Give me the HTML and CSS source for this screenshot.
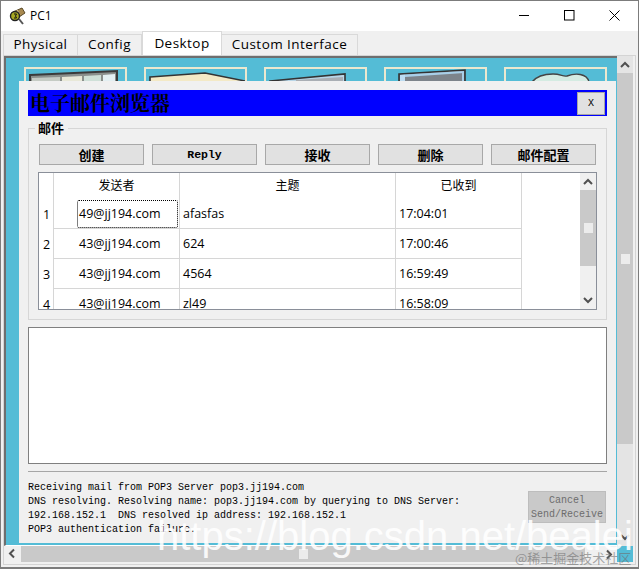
FILE: index.html
```html
<!DOCTYPE html>
<html lang="zh-CN">
<head>
<meta charset="utf-8">
<title>PC1</title>
<link rel="stylesheet" href="styles.css">
</head>
<body>
<div class="window">
  <header class="titlebar">
    <svg class="app-icon" width="17" height="18" viewBox="0 0 17 18">
      <path d="M10 12l4 5" stroke="#555" stroke-width="2"/>
      <path d="M4 5l9-4 3 5-9 6z" fill="#a8894f" stroke="#5a4a28"/>
      <path d="M8 3l3 5" stroke="#e3cf97"/>
      <circle cx="6" cy="9" r="4.5" fill="#a7a822" stroke="#222" stroke-width="1.4"/>
      <path d="M5 7h2.5l-1 2 1 2H5" fill="none" stroke="#111"/>
    </svg>
    <span class="app-name">PC1</span>
    <div class="controls">
      <svg width="11" height="11" viewBox="0 0 11 11"><path d="M0 5.5h10" stroke="#000"/></svg>
      <svg width="11" height="11" viewBox="0 0 11 11"><rect x=".5" y=".5" width="9.5" height="9.5" fill="none" stroke="#000"/></svg>
      <svg width="11" height="11" viewBox="0 0 11 11"><path d="M.5.5l10 10M10.5.5l-10 10" stroke="#000"/></svg>
    </div>
  </header>

  <nav class="tabs">
    <div class="tab tab-physical">Physical</div>
    <div class="tab tab-config">Config</div>
    <div class="tab tab-desktop">Desktop</div>
    <div class="tab tab-custom">Custom Interface</div>
  </nav>

  <main class="panel">
    <section class="viewport">
      <div class="icon-grid">
        <div class="card">
          <svg class="art" width="99" height="20" viewBox="0 0 99 20">
            <path d="M4 6L91 2v18H4z" fill="#8a8f8c" stroke="#3a3a3a" stroke-width="2"/>
            <path d="M6 9l28-1v12H6z" fill="#c5cbc4"/>
            <path d="M36 8l20-1v13H36z" fill="#e8e8d8"/>
            <path d="M58 7l17-1v14H58z" fill="#cfe0d8"/>
            <path d="M77 6l12-1v15H77z" fill="#e3eff2"/>
          </svg>
        </div>
        <div class="card">
          <svg class="art" width="99" height="20" viewBox="0 0 99 20">
            <path d="M4 8L59 4l40 8v8H4z" fill="#f3e9c6" stroke="#333" stroke-width="1.6"/>
          </svg>
        </div>
        <div class="card">
          <svg class="art" width="99" height="20" viewBox="0 0 99 20">
            <path d="M4 12L79 5v15H4z" fill="#b9d6e8" stroke="#333" stroke-width="1.6"/>
            <path d="M30 11l47-3v12H30z" fill="#a9aeb4"/>
          </svg>
        </div>
        <div class="card">
          <svg class="art" width="99" height="20" viewBox="0 0 99 20">
            <path d="M13 5L79 1v19H13z" fill="#7d848b" stroke="#333" stroke-width="1.6"/>
            <path d="M14 6l5-.4V20h-5z" fill="#bcdcf2"/>
            <path d="M19 5.6L78 2v2L19 8z" fill="#a8cfe8"/>
            <path d="M76 3h2v17h-2z" fill="#a8cfe8"/>
          </svg>
        </div>
        <div class="card">
          <svg class="art" width="99" height="20" viewBox="0 0 99 20">
            <path d="M26 13c4-5 10-8 21-8 8 0 10 3 14 2 8-3 20-3 22 6v7H26z" fill="#d4ebe2" stroke="#444" stroke-width="1.4"/>
          </svg>
        </div>
        <div class="card card-low">
          <svg class="art" width="99" height="20" viewBox="0 0 99 20">
            <rect x="0" y="0" width="99" height="20" fill="#54bcd6"/>
            <path d="M5 0h25l-8 6H12z" fill="#3b75a8"/>
            <path d="M5 0h4l4 6H10z" fill="#14263a"/>
            <rect x="27" y="0" width="34" height="6" fill="#cb6d6d"/>
            <rect x="61" y="0" width="26" height="6" fill="#e4e4e0"/>
            <rect x="87" y="0" width="9" height="6" fill="#3a3230"/>
          </svg>
        </div>
      </div>

      <div class="dialog">
        <div class="dialog-title">
          <h1 class="dialog-heading">电子邮件浏览器</h1>
          <button class="close-btn">X</button>
        </div>

        <fieldset class="mail-group">
          <legend class="mail-legend">邮件</legend>
          <div class="actions">
            <button class="action">创建</button>
            <button class="action action-latin">Reply</button>
            <button class="action">接收</button>
            <button class="action">删除</button>
            <button class="action">邮件配置</button>
          </div>
          <div class="list">
            <table class="mail-table">
              <colgroup>
                <col class="c-num"><col class="c-from"><col class="c-subject"><col class="c-time">
              </colgroup>
              <thead>
                <tr><th class="num"></th><th>发送者</th><th>主题</th><th>已收到</th></tr>
              </thead>
              <tbody>
                <tr><td class="num">1</td><td><span class="from focus">49@jj194.com</span></td><td class="text">afasfas</td><td class="text">17:04:01</td></tr>
                <tr><td class="num">2</td><td><span class="from">43@jj194.com</span></td><td class="text">624</td><td class="text">17:00:46</td></tr>
                <tr><td class="num">3</td><td><span class="from">43@jj194.com</span></td><td class="text">4564</td><td class="text">16:59:49</td></tr>
                <tr><td class="num">4</td><td><span class="from">43@jj194.com</span></td><td class="text">zl49</td><td class="text">16:58:09</td></tr>
              </tbody>
            </table>
            <div class="list-scroll">
              <svg class="chev" width="16" height="17" viewBox="0 0 16 17"><path d="M4 11l4-4 4 4" fill="none" stroke="#505050" stroke-width="2"/></svg>
              <div class="list-thumb"><span class="grip"></span></div>
              <svg class="chev chev-bottom" width="16" height="17" viewBox="0 0 16 17"><path d="M4 6l4 4 4-4" fill="none" stroke="#505050" stroke-width="2"/></svg>
            </div>
          </div>
        </fieldset>

        <div class="message"></div>
        <hr class="divider">

        <div class="status">
          <pre class="log">Receiving mail from POP3 Server pop3.jj194.com
DNS resolving. Resolving name: pop3.jj194.com by querying to DNS Server:
192.168.152.1  DNS resolved ip address: 192.168.152.1
POP3 authentication failure.</pre>
          <button class="cancel" disabled>Cancel<br>Send/Receive</button>
        </div>
      </div>
    </section>

    <aside class="v-scroll">
      <svg class="chev" width="16" height="17" viewBox="0 0 16 17"><path d="M4 11l4-4 4 4" fill="none" stroke="#505050" stroke-width="2"/></svg>
      <div class="v-thumb"><span class="grip"></span></div>
      <svg class="chev chev-bottom" width="16" height="17" viewBox="0 0 16 17"><path d="M4 6l4 4 4-4" fill="none" stroke="#505050" stroke-width="2"/></svg>
    </aside>

    <div class="h-scroll">
      <svg class="chev" width="17" height="15" viewBox="0 0 17 15"><path d="M10 3.5l-4 4 4 4" fill="none" stroke="#505050" stroke-width="2"/></svg>
      <div class="h-thumb"><span class="grip"></span></div>
      <svg class="chev chev-end" width="17" height="15" viewBox="0 0 17 15"><path d="M7 3.5l4 4-4 4" fill="none" stroke="#505050" stroke-width="2"/></svg>
    </div>
    <div class="corner"></div>
  </main>

  <div class="watermark">https://blog.csdn.net/bealei</div>
  <div class="watermark-small">@稀土掘金技术社区</div>
</div>
</body>
</html>
```

FILE: styles.css
```css
* { box-sizing: border-box; }
html, body { margin: 0; padding: 0; }
body { width: 639px; height: 569px; overflow: hidden; background: #fff; }

.window {
  position: relative;
  width: 639px;
  height: 569px;
  display: flex;
  flex-direction: column;
  background: #f0f0f0;
  border: 1px solid #7c7c7c;
  border-bottom-width: 2px;
  overflow: hidden;
  font-family: "Open Sans", "Noto Sans CJK SC", sans-serif;
  color: #000;
}

/* title bar */
.titlebar {
  flex: none;
  height: 30px;
  background: #fff;
  display: flex;
  align-items: center;
  padding-left: 8px;
}
.app-icon { margin-right: 4px; margin-top: -1px; }
.app-name { font-size: 12px; margin-top: -1px; }
.controls {
  margin-left: auto;
  display: flex;
  gap: 34px;
  padding-right: 18px;
  margin-top: -1px;
}

/* tabs */
.tabs {
  flex: none;
  height: 24px;
  display: flex;
  align-items: flex-end;
  padding-left: 2px;
  font-size: 13.5px;
  letter-spacing: .45px;
}
.tab {
  height: 21px;
  padding-bottom: 2px;
  display: flex;
  align-items: center;
  justify-content: center;
  background: #f0f0f0;
  border: 1px solid #d9d9d9;
  border-bottom: 0;
  border-left: 0;
}
.tab-physical { width: 75px; border-left: 1px solid #d9d9d9; }
.tab-config { width: 64px; }
.tab-desktop { width: 80px; height: 24px; padding-bottom: 2px; background: #fff; border-left: 1px solid #d9d9d9; }
.tab-custom { width: 136px; }

/* main panel */
.panel {
  flex: 1;
  margin: 0 2px 2px 2px;
  border: 1px solid #d4d4d4;
  outline: 0;
  display: grid;
  grid-template-columns: 613px 16px;
  grid-template-rows: 490px 16px;
  min-height: 0;
}

.viewport {
  position: relative;
  overflow: hidden;
  background: #54bcd6;
  border-top: 2px solid #6e6e6e;
  border-left: 2px solid #6e6e6e;
  border-bottom: 1px solid #fff;
}

/* desktop launcher icons behind the dialog */
.icon-grid {
  display: grid;
  grid-template-columns: repeat(5, 103px);
  grid-template-rows: 103px 103px;
  column-gap: 17px;
  row-gap: 350px;
  padding: 9px 0 0 18px;
}
.card {
  border: 2px solid #ebe8cf;
  background: #54bcd6;
  overflow: hidden;
}
.art { display: block; }
.card-low { border: 0; padding-left: 2px; grid-column: 1; }

/* dialog */
.dialog {
  position: absolute;
  left: 13px;
  top: 23px;
  width: 597px;
  height: 462px;
  padding: 9px;
  background: #f0f0f0;
  display: flex;
  flex-direction: column;
}

.dialog-title {
  flex: none;
  height: 26px;
  background: #0000ff;
  display: flex;
  align-items: flex-start;
  justify-content: space-between;
  padding: 2px 2px 0 2px;
  margin-bottom: 5px;
}
.dialog-heading {
  margin: -1px 0 0;
  font: 700 20px/23px "Noto Serif CJK SC", "Noto Sans CJK SC", serif;
  color: #000;
}
.close-btn {
  width: 28px;
  height: 23px;
  padding: 0;
  background: #e1e1e1;
  border: 1px solid #a6a6a6;
  font: 400 10px "Liberation Mono", monospace;
  color: #000;
}

/* group */
.mail-group {
  flex: none;
  height: 199px;
  margin: 0;
  min-width: 0;
  padding: 9px 9px 0 9px;
  border: 1px solid #d6d6d6;
}
.mail-legend {
  margin-left: -3px;
  padding: 0 4px 0 3px;
  height: 14px;
  font: 700 13px/14px "Noto Sans CJK SC", sans-serif;
}
.actions {
  display: flex;
  gap: 8px;
  margin-left: 1px;
  margin-bottom: 7px;
}
.action {
  width: 105px;
  height: 21px;
  padding: 0;
  background: #e1e1e1;
  border: 1px solid #a8a8a8;
  font: 700 13px/18px "Noto Sans CJK SC", sans-serif;
  color: #000;
}
.action-latin { font: 700 11.5px/18px "Liberation Mono", monospace; }

.list {
  position: relative;
  height: 138px;
  display: flex;
  justify-content: space-between;
  background: #fff;
  border: 1px solid #8a8f99;
  overflow: hidden;
}
.mail-table {
  table-layout: fixed;
  width: 483px;
  flex: none;
  border-collapse: separate;
  border-spacing: 0;
  font-size: 12.5px;
  align-self: flex-start;
}
.c-num { width: 15px; }
.c-from { width: 126px; }
.c-subject { width: 216px; }
.c-time { width: 126px; }
.mail-table th {
  height: 26px;
  padding: 0 0 2px;
  font: 400 12px/14px "Noto Sans CJK SC", sans-serif;
  border-right: 1px solid #d6d6d6;
}
.mail-table td {
  height: 30px;
  padding: 0;
  border-right: 1px solid #d6d6d6;
  border-bottom: 1px solid #d6d6d6;
  white-space: nowrap;
}
.mail-table .num {
  padding-left: 4px;
  border-bottom: 0;
}
.mail-table .text { padding-left: 3px; }
.from {
  display: block;
  width: 101px;
  height: 28px;
  margin-left: 23px;
  padding-left: 1px;
  line-height: 26px;
  border: 1px solid transparent;
}
.from.focus { border: 1px dotted #000; border-radius: 2px; }

.list-scroll {
  flex: none;
  width: 16px;
  margin-right: 0;
  background: #f0f0f0;
  display: flex;
  flex-direction: column;
}
.list-thumb {
  height: 76px;
  background: #c9c9c9;
  display: flex;
  align-items: center;
  justify-content: center;
}
.chev { display: block; flex: none; }
.chev-bottom { margin-top: auto; }
.grip { display: block; width: 9px; height: 10px; background: #ececec; }

/* message area */
.message {
  flex: none;
  height: 137px;
  margin-top: 7px;
  background: #fff;
  border: 1px solid #7f7f7f;
}
.divider {
  flex: none;
  width: 100%;
  height: 1px;
  margin: 7px 0 0;
  border: 0;
  background: #a6a6a6;
}
.status {
  display: flex;
  justify-content: space-between;
  align-items: flex-start;
  padding-right: 1px;
}
.log {
  margin: 9px 0 0;
  font: 400 10px/14px "Liberation Mono", monospace;
  color: #000;
}
.cancel {
  width: 78px;
  height: 32px;
  margin-top: 19px;
  padding: 2px 0 0;
  background: #c9c9c9;
  border: 1px solid #bdbdbd;
  font: 400 10px/14px "Liberation Mono", monospace;
  color: #6d6d6d;
}

/* scrollbars */
.v-scroll {
  display: flex;
  flex-direction: column;
  background: #e4e4e4;
}
.v-thumb {
  height: 371px;
  background: #c9c9c9;
  display: flex;
  align-items: center;
  justify-content: center;
}
.h-scroll {
  display: flex;
  align-items: stretch;
  background: #f0f0f0;
}
.h-thumb {
  width: 564px;
  background: #c9c9c9;
  display: flex;
  align-items: center;
  justify-content: center;
}
.chev-end { margin-left: auto; margin-top: 0; align-self: center; }
.corner { background: #54bcd6; }

/* overlay watermarks baked into the screenshot */
.watermark {
  position: absolute;
  left: 156px;
  top: 513px;
  font: 400 40px/44px "Liberation Sans", sans-serif;
  color: rgba(255, 255, 255, .88);
  white-space: nowrap;
}
.watermark-small {
  position: absolute;
  left: 514px;
  top: 548px;
  font: 400 13px/18px "Noto Sans CJK SC", sans-serif;
  color: rgba(110, 110, 110, .6);
  white-space: nowrap;
}
```
